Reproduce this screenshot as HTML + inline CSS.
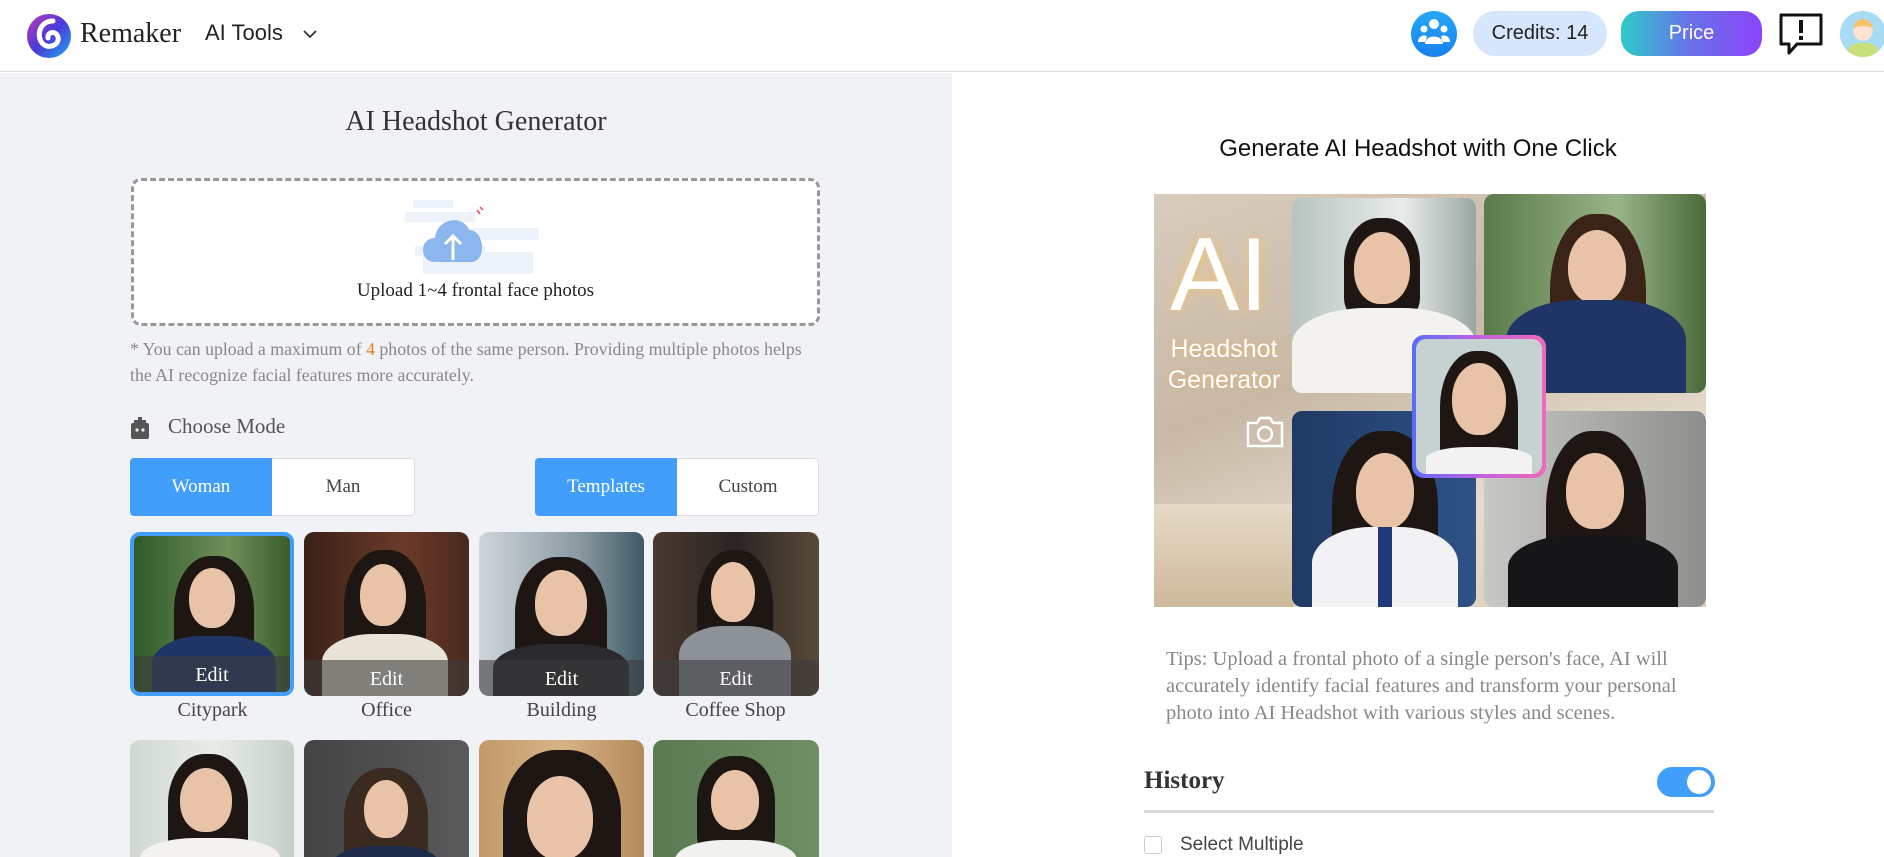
<!DOCTYPE html>
<html><head><meta charset="utf-8"><style>
*{margin:0;padding:0;box-sizing:border-box}
html,body{width:1884px;height:857px;overflow:hidden}
body{font-family:"Liberation Serif",serif;background:#fff;position:relative}
.abs{position:absolute}
.hdr{left:0;top:0;width:1884px;height:72px;background:#fff;border-bottom:1px solid #dcdcdc}
.left{left:0;top:73px;width:952px;height:784px;background:#f0f2f5}
.sans{font-family:"Liberation Sans",sans-serif}
.p{overflow:hidden;border-radius:10px}
.p .hair{position:absolute;border-radius:45% 45% 20% 20%;background:#1e1612}
.p .face{position:absolute;border-radius:50% 50% 46% 46%;background:#e9c3a8}
.p .body{position:absolute;border-radius:40% 40% 0 0}
.edit{position:absolute;left:0;bottom:0;width:100%;height:36px;background:rgba(60,60,60,.6);color:#fff;font-size:20px;text-align:center;line-height:38px}
.lbl{position:absolute;font-size:20px;color:#444;text-align:center;width:165px}
.btn{position:absolute;top:458px;height:58px;width:142px;font-size:19px;text-align:center;line-height:58px}
</style></head><body>
<div class="abs hdr"></div>
<svg class="abs" style="left:26px;top:13px" width="46" height="46" viewBox="0 0 46 46"><defs><linearGradient id="lg" x1="0" y1="0" x2="1" y2="1"><stop offset="0" stop-color="#c03ab8"/><stop offset=".5" stop-color="#4a3ad8"/><stop offset="1" stop-color="#1fa8f0"/></linearGradient></defs><circle cx="23" cy="23" r="22" fill="url(#lg)"/><path d="M27 8 C14 8 10 22 16 30 C22 37 34 32 32 24 C30 17 21 19 22 25" stroke="#fff" stroke-width="5" fill="none" stroke-linecap="round"/></svg>
<div class="abs" style="left:80px;top:18px;font-size:28px;color:#222">Remaker</div>
<div class="abs sans" style="left:205px;top:20px;font-size:22px;color:#222">AI Tools</div>
<svg class="abs" style="left:302px;top:28px" width="16" height="12"><path d="M2 3 L8 9 L14 3" stroke="#333" stroke-width="1.8" fill="none"/></svg>
<div class="abs" style="left:1411px;top:11px;width:46px;height:46px;border-radius:50%;background:linear-gradient(#25a8f8,#1a80ee)"></div>
<svg class="abs" style="left:1413px;top:14px" width="42" height="40" viewBox="0 0 42 40"><circle cx="21" cy="10" r="5" fill="#fff"/><circle cx="11" cy="15" r="3.5" fill="#fff"/><circle cx="31" cy="15" r="3.5" fill="#fff"/><path d="M12 30 C12 20 30 20 30 30Z" fill="#fff"/><path d="M5 28 C5 21 13 20 14 23 L12 28Z M37 28 C37 21 29 20 28 23 L30 28Z" fill="#fff"/></svg>
<div class="abs sans" style="left:1473px;top:11px;width:134px;height:45px;border-radius:23px;background:#d6e6fd;font-size:20px;color:#222;text-align:center;line-height:45px">Credits: 14</div>
<div class="abs sans" style="left:1621px;top:11px;width:141px;height:45px;border-radius:18px;background:linear-gradient(90deg,#2ccbc8,#6a70e8,#8b44fb);font-size:20px;color:#fff;text-align:center;line-height:45px">Price</div>
<svg class="abs" style="left:1778px;top:12px" width="46" height="44" viewBox="0 0 46 44"><path d="M3 3 H43 V32 H19 L11 41 V32 H3 Z" fill="#fff" stroke="#111" stroke-width="3" stroke-linejoin="round"/><rect x="21" y="8" width="4" height="13" fill="#111"/><rect x="21" y="24" width="4" height="4" fill="#111"/></svg>
<div class="abs" style="left:1840px;top:11px;width:46px;height:46px;border-radius:50%;background:#a8dcf5;overflow:hidden"><div class="abs" style="left:13px;top:8px;width:20px;height:22px;border-radius:50%;background:#fde3d0;border-top:7px solid #f7c36a"></div><div class="abs" style="left:8px;top:32px;width:30px;height:20px;border-radius:40% 40% 0 0;background:#c9e07a"></div></div>

<div class="abs left"></div>
<div class="abs" style="left:0;top:106px;width:952px;text-align:center;font-size:28px;color:#333">AI Headshot Generator</div>
<div class="abs" style="left:131px;top:178px;width:689px;height:148px;border:3px dashed #999;border-radius:10px;background:#fff"></div>
<svg class="abs" style="left:405px;top:198px" width="135" height="78" viewBox="0 0 135 78"><rect x="8" y="2" width="40" height="8" fill="#eef3fb"/><rect x="0" y="14" width="70" height="10" fill="#eef3fb"/><rect x="40" y="30" width="94" height="12" fill="#eef3fb"/><rect x="10" y="48" width="70" height="10" fill="#eef3fb"/><rect x="18" y="54" width="110" height="22" fill="#eef3fb"/><path d="M30 64 C14 64 14 40 30 40 C32 20 58 16 64 32 C80 32 82 64 66 64Z" fill="#8bb6ee"/><path d="M48 62 V38 M40 46 L48 38 L56 46" stroke="#fff" stroke-width="3" fill="none"/><path d="M72 12 l3 4 M75 9 l3 3" stroke="#e84a5f" stroke-width="1.5"/></svg>
<div class="abs" style="left:131px;top:280px;width:689px;text-align:center;font-size:19px;color:#222">Upload 1~4 frontal face photos</div>
<div class="abs" style="left:130px;top:336px;width:672px;font-size:17.8px;color:#888;line-height:26px">* You can upload a maximum of <span style="color:#f07b1a">4</span> photos of the same person. Providing multiple photos helps the AI recognize facial features more accurately.</div>
<svg class="abs" style="left:130px;top:417px" width="20" height="22" viewBox="0 0 20 22"><rect x="8" y="0" width="4" height="4" fill="#555"/><rect x="4" y="3" width="12" height="3" fill="#555"/><rect x="1" y="6" width="18" height="16" rx="2" fill="#555"/><circle cx="7" cy="13" r="1.6" fill="#f0f2f5"/><circle cx="13" cy="13" r="1.6" fill="#f0f2f5"/></svg>
<div class="abs" style="left:168px;top:414px;font-size:21px;color:#555">Choose Mode</div>
<div class="abs" style="left:130px;top:458px;width:285px;height:58px;border:1px solid #ddd;border-radius:4px;background:#fff"></div>
<div class="btn" style="left:130px;background:#419ffb;color:#fff;border-radius:4px 0 0 4px">Woman</div>
<div class="btn" style="left:272px;color:#444">Man</div>
<div class="abs" style="left:535px;top:458px;width:284px;height:58px;border:1px solid #ddd;border-radius:4px;background:#fff"></div>
<div class="btn" style="left:535px;background:#419ffb;color:#fff;border-radius:4px 0 0 4px">Templates</div>
<div class="btn" style="left:677px;color:#444">Custom</div>

<div class="abs p" style="left:130px;top:532px;width:164px;height:164px;border:4px solid #419ffb;background:linear-gradient(90deg,#2f5a2a,#6f8f5a 60%,#3b5d2c)"><div class="hair" style="left:40px;top:20px;width:80px;height:120px"></div><div class="face" style="left:55px;top:32px;width:46px;height:60px"></div><div class="body" style="left:18px;top:100px;width:124px;height:70px;background:#1f3566"></div><div class="edit">Edit</div></div>
<div class="abs p" style="left:304px;top:532px;width:165px;height:164px;background:linear-gradient(90deg,#3a2118,#6b3a28 60%,#4a2a1e)"><div class="hair" style="left:40px;top:18px;width:82px;height:125px"></div><div class="face" style="left:56px;top:32px;width:46px;height:62px"></div><div class="body" style="left:18px;top:102px;width:126px;height:70px;background:#e9e4d8"></div><div class="edit">Edit</div></div>
<div class="abs p" style="left:479px;top:532px;width:165px;height:164px;background:linear-gradient(90deg,#cfd6da,#8c9aa2 60%,#3e5a66)"><div class="hair" style="left:36px;top:25px;width:92px;height:125px"></div><div class="face" style="left:56px;top:38px;width:52px;height:66px"></div><div class="body" style="left:14px;top:112px;width:136px;height:60px;background:#2a2a2e"></div><div class="edit">Edit</div></div>
<div class="abs p" style="left:653px;top:532px;width:166px;height:164px;background:linear-gradient(90deg,#4a3a30,#2a2523 50%,#5a4a3a)"><div class="hair" style="left:44px;top:18px;width:76px;height:125px"></div><div class="face" style="left:58px;top:30px;width:44px;height:60px"></div><div class="body" style="left:26px;top:94px;width:112px;height:72px;background:#8d9298"></div><div class="edit">Edit</div></div>
<div class="lbl" style="left:130px;top:699px">Citypark</div>
<div class="lbl" style="left:304px;top:699px">Office</div>
<div class="lbl" style="left:479px;top:699px">Building</div>
<div class="lbl" style="left:653px;top:699px">Coffee Shop</div>
<div class="abs p" style="left:130px;top:740px;width:164px;height:117px;border-radius:10px 10px 0 0;background:linear-gradient(90deg,#cfd8d0,#e8ece8 50%,#c5d0c8)"><div class="hair" style="left:38px;top:14px;width:80px;height:110px"></div><div class="face" style="left:50px;top:28px;width:52px;height:64px"></div><div class="body" style="left:10px;top:98px;width:140px;height:50px;background:#f4f2ee"></div></div>
<div class="abs p" style="left:304px;top:740px;width:165px;height:117px;border-radius:10px 10px 0 0;background:linear-gradient(90deg,#444,#5a5a5c)"><div class="hair" style="left:40px;top:28px;width:84px;height:110px;background:#3a2a20"></div><div class="face" style="left:60px;top:40px;width:44px;height:58px"></div><div class="body" style="left:30px;top:106px;width:104px;height:40px;background:#1d2a4a"></div></div>
<div class="abs p" style="left:479px;top:740px;width:165px;height:117px;border-radius:10px 10px 0 0;background:linear-gradient(90deg,#c29a6a,#d6b386 50%,#b48a5c)"><div class="hair" style="left:24px;top:10px;width:118px;height:140px"></div><div class="face" style="left:48px;top:36px;width:66px;height:84px"></div></div>
<div class="abs p" style="left:653px;top:740px;width:166px;height:117px;border-radius:10px 10px 0 0;background:linear-gradient(90deg,#5b7a52,#6f8e64)"><div class="hair" style="left:44px;top:16px;width:78px;height:100px"></div><div class="face" style="left:58px;top:30px;width:48px;height:60px"></div><div class="body" style="left:22px;top:100px;width:122px;height:50px;background:#f1f1ee"></div></div>

<div class="abs sans" style="left:952px;top:135px;width:932px;text-align:center;font-size:24px;color:#111">Generate AI Headshot with One Click</div>
<div class="abs" style="left:1154px;top:194px;width:552px;height:413px;background:linear-gradient(160deg,#d8ccbc,#c8b8a6 40%,#e6dccd 70%,#d9cbb6);overflow:hidden">
 <div class="abs" style="left:0;top:310px;width:140px;height:103px;background:linear-gradient(#e6dac6,#cdb99b)"></div>
 <div class="abs sans" style="left:16px;top:22px;font-size:104px;color:#fff;text-shadow:0 0 12px #f3c27a">AI</div>
 <div class="abs sans" style="left:0;top:140px;width:140px;font-size:25px;color:#fff;text-shadow:0 0 6px #e6b06a;line-height:31px;text-align:center">Headshot<br>Generator</div>
 <svg class="abs" style="left:92px;top:222px" width="38" height="32" viewBox="0 0 38 32"><path d="M2 7 H11 L14 2 H24 L27 7 H36 V30 H2Z" fill="none" stroke="#fff" stroke-width="2.5"/><circle cx="19" cy="18" r="7" fill="none" stroke="#fff" stroke-width="2.5"/></svg>
 <div class="abs p" style="left:138px;top:4px;width:184px;height:195px;background:linear-gradient(90deg,#b8c4bf,#e8ecea 60%,#9aa6a2)"><div class="hair" style="left:52px;top:20px;width:76px;height:100px"></div><div class="face" style="left:62px;top:34px;width:56px;height:72px"></div><div class="body" style="left:0;top:110px;width:184px;height:90px;background:#f4f2ee"></div></div>
 <div class="abs p" style="left:330px;top:0;width:222px;height:199px;background:linear-gradient(90deg,#5a7a4a,#9ab48a 60%,#4a6a3a)"><div class="hair" style="left:66px;top:20px;width:96px;height:170px;background:#3a2418"></div><div class="face" style="left:84px;top:36px;width:58px;height:74px"></div><div class="body" style="left:22px;top:106px;width:180px;height:100px;background:#1f3566"></div></div>
 <div class="abs p" style="left:138px;top:217px;width:184px;height:196px;background:linear-gradient(90deg,#1f3a64,#2e5286)"><div class="hair" style="left:40px;top:20px;width:106px;height:170px"></div><div class="face" style="left:64px;top:42px;width:58px;height:76px"></div><div class="body" style="left:20px;top:116px;width:146px;height:90px;background:#f2f2f4"></div><div class="abs" style="left:86px;top:116px;width:14px;height:80px;background:#1f3a7a"></div></div>
 <div class="abs p" style="left:330px;top:217px;width:222px;height:196px;background:linear-gradient(90deg,#c8c8c6,#8e8e8c)"><div class="hair" style="left:62px;top:20px;width:100px;height:170px"></div><div class="face" style="left:82px;top:42px;width:58px;height:76px"></div><div class="body" style="left:24px;top:124px;width:170px;height:80px;background:#161618"></div></div>
 <div class="abs" style="left:258px;top:141px;width:134px;height:143px;border-radius:12px;background:linear-gradient(90deg,#5c6cf8,#c060e0,#f06ab8);padding:4px"><div class="p" style="position:relative;width:100%;height:100%;background:#c6d2d2"><div class="hair" style="left:24px;top:12px;width:78px;height:125px"></div><div class="face" style="left:36px;top:24px;width:54px;height:72px"></div><div class="body" style="left:10px;top:108px;width:106px;height:30px;background:#f2f2f2"></div></div></div>
</div>
<div class="abs" style="left:1166px;top:646px;width:540px;font-size:20.5px;color:#888;line-height:27px">Tips: Upload a frontal photo of a single person's face, AI will accurately identify facial features and transform your personal photo into AI Headshot with various styles and scenes.</div>
<div class="abs" style="left:1144px;top:767px;font-size:25px;font-weight:bold;color:#333">History</div>
<div class="abs" style="left:1657px;top:767px;width:58px;height:30px;border-radius:15px;background:#419ffb"><div class="abs" style="left:30px;top:3px;width:24px;height:24px;border-radius:50%;background:#fff"></div></div>
<div class="abs" style="left:1144px;top:810px;width:570px;height:3px;background:#d6d6d6"></div>
<div class="abs" style="left:1144px;top:836px;width:18px;height:18px;border:1px solid #ccc;border-radius:3px;background:#fff"></div>
<div class="abs sans" style="left:1180px;top:834px;font-size:19px;color:#444">Select Multiple</div>
</body></html>
